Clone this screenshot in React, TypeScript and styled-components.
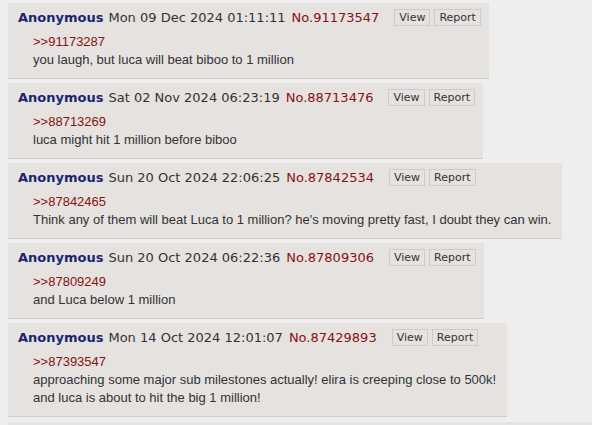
import React from 'react';
import styled, { createGlobalStyle } from 'styled-components';

const GlobalStyle = createGlobalStyle`
    html, body {
        margin: 0;
        padding: 0;
        background: #eeeeee;
        overflow: hidden;
    }
`

type PostData = {
    date: string;
    no: string;
    quote: string;
    lines: string[];
};

const posts: PostData[] = [
    {
        date: 'Mon 09 Dec 2024 01:11:11',
        no: '91173547',
        quote: '91173287',
        lines: ['you laugh, but luca will beat biboo to 1 million'],
    },
    {
        date: 'Sat 02 Nov 2024 06:23:19',
        no: '88713476',
        quote: '88713269',
        lines: ['luca might hit 1 million before biboo'],
    },
    {
        date: 'Sun 20 Oct 2024 22:06:25',
        no: '87842534',
        quote: '87842465',
        lines: ["Think any of them will beat Luca to 1 million? he's moving pretty fast, I doubt they can win."],
    },
    {
        date: 'Sun 20 Oct 2024 06:22:36',
        no: '87809306',
        quote: '87809249',
        lines: ['and Luca below 1 million'],
    },
    {
        date: 'Mon 14 Oct 2024 12:01:07',
        no: '87429893',
        quote: '87393547',
        lines: [
            'approaching some major sub milestones actually! elira is creeping close to 500k!',
            'and luca is about to hit the big 1 million!',
        ],
    },
];

export default function App() {
    return (
        <Page>
            <GlobalStyle />
            {posts.map((p) => (
                <Post key={p.no}>
                    <Header>
                        <Name>Anonymous</Name>
                        <Date>{p.date}</Date>
                        <PostNo>No.{p.no}</PostNo>
                        <Actions>
                            <ActionButton>View</ActionButton>
                            <ActionButton>Report</ActionButton>
                        </Actions>
                    </Header>
                    <Message>
                        <QuoteLink href="#">&gt;&gt;{p.quote}</QuoteLink>
                        {p.lines.map((l, i) => (
                            <Line key={i}>{l}</Line>
                        ))}
                    </Message>
                </Post>
            ))}
            <NextPost />
        </Page>
    );
}

const Page = styled.div`
    padding: 3px 0 0 8px;
    display: flex;
    flex-direction: column;
    align-items: flex-start;
    gap: 4px;
`

const Post = styled.div`
    background: #e5e2e0;
    border-bottom: 1px solid #cfcbc9;
    padding: 6px 8px 9px 10px;
`

const NextPost = styled.div`
    align-self: stretch;
    height: 40px;
    margin-top: 1px;
    background: #e6e4e3;
`

const Header = styled.div`
    display: flex;
    align-items: center;
    height: 17px;
    font-family: "DejaVu Sans", Verdana, sans-serif;
    font-size: 13px;
    white-space: nowrap;
`

const Name = styled.span`
    font-weight: bold;
    color: #1b2470;
    margin-right: 5px;
`

const Date = styled.span`
    color: #333333;
    margin-right: 6px;
`

const PostNo = styled.span`
    color: #8a1111;
    margin-right: 15px;
`

const Actions = styled.div`
    display: flex;
    gap: 4px;
`

const ActionButton = styled.span`
    display: inline-flex;
    align-items: center;
    height: 17px;
    box-sizing: border-box;
    padding: 0 4px;
    border: 1px solid #cccccc;
    font-size: 11px;
    color: #333333;
`

const Message = styled.div`
    margin: 7px 3px 0 15px;
    font-family: "Liberation Sans", Arial, sans-serif;
    font-size: 13px;
    line-height: 18px;
    color: #333333;
    white-space: nowrap;
`

const QuoteLink = styled.a`
    display: block;
    color: #8a1111;
    text-decoration: none;
`

const Line = styled.div``
